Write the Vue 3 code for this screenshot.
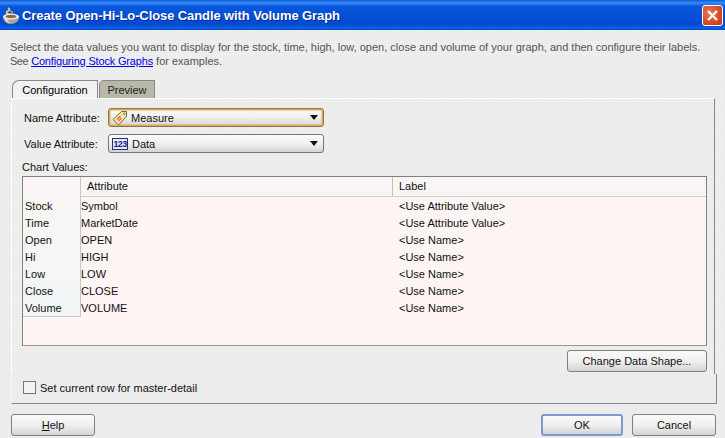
<script setup>
const rows = [
  ['Stock', 'Symbol', '<Use Attribute Value>'],
  ['Time', 'MarketDate', '<Use Attribute Value>'],
  ['Open', 'OPEN', '<Use Name>'],
  ['Hi', 'HIGH', '<Use Name>'],
  ['Low', 'LOW', '<Use Name>'],
  ['Close', 'CLOSE', '<Use Name>'],
  ['Volume', 'VOLUME', '<Use Name>'],
]
</script>

<template>
  <div class="window">
    <header class="titlebar">
      <svg class="cup" width="18" height="18" viewBox="0 0 18 18">
        <path d="M6 2c2 1 2 2 0 3s-2 2 0 3 3 1 3 1" fill="none" stroke="#f8d860" stroke-width="1.6" />
        <path d="M8 5c2 .5 3 1 2 2.5" fill="none" stroke="#f0b040" stroke-width="1.2" />
        <path d="M1 11c0 4 3.5 7 8 7s8-3 8-7z" fill="#a9a59a" />
        <path d="M2.5 12c.5 3 3 5 6 5-2-1-3.500-3-3.500-5z" fill="#e6e3da" />
        <ellipse cx="9" cy="10.500" rx="8" ry="3" fill="#f4f2ea" />
        <ellipse cx="9" cy="10.500" rx="5.500" ry="1.700" fill="#8a6a3a" />
      </svg>
      <span class="title">Create Open-Hi-Lo-Close Candle with Volume Graph</span>
      <button class="close">
        <svg width="13" height="13" viewBox="0 0 13 13"><path d="M2 2l9 9M11 2l-9 9" stroke="#fff" stroke-width="2.4" /></svg>
      </button>
    </header>

    <section class="upper">
      <p class="desc">Select the data values you want to display for the stock, time, high, low, open, close and volume of your graph, and then configure their labels.<br><span class="see">See</span> <a class="link">Configuring Stock Graphs</a> for examples.</p>

      <div class="tabs">
        <div class="tab active">Configuration</div>
        <div class="tab">Preview</div>
      </div>

      <div class="panel">
        <div class="field">
          <label>Name Attribute:</label>
          <div class="combo focused">
            <svg class="ico" width="16" height="16" viewBox="0 0 16 16">
              <path d="M9.500 1.500h5v5L6.500 15 1 9.500z" fill="#f6e8a8" stroke="#7a6c30" />
              <circle cx="12.300" cy="3.800" r="1" fill="#fff" stroke="#7a6c30" stroke-width=".7" />
              <path d="M5 9.500l3.500-3.500M6.500 11l3-3" stroke="#d86060" stroke-width="1.300" />
            </svg>
            <span>Measure</span>
            <i class="arrow"></i>
          </div>
        </div>
        <div class="field">
          <label>Value Attribute:</label>
          <div class="combo">
            <span class="num">123</span>
            <span>Data</span>
            <i class="arrow"></i>
          </div>
        </div>
        <div class="chart-label">Chart Values:</div>

        <div class="table">
          <div class="row-heads">
            <div class="corner"></div>
            <div v-for="r in rows" :key="r[0]" class="rh">{{ r[0] }}</div>
          </div>
          <div class="grid">
            <div class="thead">
              <div class="c1 th">Attribute</div>
              <div class="c2 th">Label</div>
            </div>
            <div v-for="r in rows" :key="r[0]" class="tr">
              <div class="c1">{{ r[1] }}</div>
              <div class="c2">{{ r[2] }}</div>
            </div>
          </div>
        </div>

        <div class="shape-row">
          <button class="btn shape">Change Data Shape...</button>
        </div>
      </div>
    </section>

    <section class="lower">
      <span class="check"></span>
      <span>Set current row for master-detail</span>
    </section>

    <footer class="footer">
      <button class="btn wide help"><u>H</u>elp</button>
      <div class="spacer"></div>
      <button class="btn ok">OK</button>
      <button class="btn wide cancel">Cancel</button>
    </footer>
  </div>
</template>

<style scoped>
.window {
  width: 725px;
  height: 438px;
  overflow: hidden;
  display: flex;
  flex-direction: column;
  background: #ececec;
  font-family: "Liberation Sans", Arial, sans-serif;
  font-size: 11px;
  color: #111;
}
.titlebar {
  height: 30px;
  flex: none;
  display: flex;
  align-items: center;
  padding: 0 2px 0 2px;
  box-sizing: border-box;
  background: linear-gradient(#0a5ce0 0, #3a8cf4 3px, #0858e0 6px, #0450d4 15px, #0349cf 24px, #0a62e8 28px, #0344b8 30px);
}
.cup { flex: none; }
.title {
  margin-left: 2px;
  font-size: 13px;
  font-weight: 700;
  color: #fff;
  letter-spacing: -0.1px;
  flex: 1;
  text-shadow: 1px 1px 0 #0a2a90;
}
.close {
  width: 21px;
  height: 21px;
  padding: 0;
  border: 1px solid #fff;
  border-radius: 3px;
  background: radial-gradient(circle at 35% 35%, #e87858, #d84a20 60%, #c03810);
  display: flex;
  align-items: center;
  justify-content: center;
}
.upper {
  height: 344px;
  flex: none;
  background-color: #eeeeee;
  background-image: radial-gradient(#e8e8e2 0.7px, transparent 0.8px);
  background-size: 3px 3px;
  display: flex;
  flex-direction: column;
}
.desc {
  margin: 0;
  padding: 10px 0 0 10px;
  height: 40px;
  line-height: 14px;
  color: #555;
  white-space: nowrap;
}
.see { letter-spacing: -0.5px; }
.link {
  color: #0000ee;
  text-decoration: underline;
  letter-spacing: -0.17px;
}
.tabs {
  display: flex;
  margin-left: 12px;
  height: 18px;
  flex: none;
}
.tab {
  width: 56px;
  margin-left: 1px;
  box-sizing: border-box;
  height: 18px;
  border: 1px solid #888;
  border-bottom: 0;
  border-radius: 5px 0 0 0;
  background: #b8b8a8;
  text-align: center;
  line-height: 18px;
  color: #222;
}
.tab.active {
  width: 86px;
  margin-left: 0;
  border-radius: 7px 0 0 0;
  background: #f2f2f2;
  color: #000;
}
.panel {
  margin-left: 11px;
  width: 704px;
  box-sizing: border-box;
  flex: 1;
  border-top: 1px solid #fff;
  border-left: 1px solid #fff;
  border-right: 1px solid #888;
  padding: 9px 7px 0 10px;
}
.field {
  display: flex;
  align-items: center;
  height: 19px;
  margin-bottom: 7px;
}
.field label {
  width: 86px;
  padding-left: 2px;
  box-sizing: border-box;
}
.combo {
  width: 216px;
  height: 19px;
  box-sizing: border-box;
  display: flex;
  align-items: center;
  gap: 3px;
  padding: 0 5px 0 3px;
  border: 1px solid #777;
  border-radius: 3px;
  background: linear-gradient(#fafafa, #f0f0f0 50%, #d4d4d4);
  position: relative;
}
.combo.focused {
  box-shadow: inset 0 0 0 1.5px #eeaa38;
}
.combo span:nth-of-type(1) { flex: none; }
.ico { flex: none; }
.num {
  width: 14px;
  height: 10px;
  margin: 0 1px 0 0;
  border: 1px solid #2a2a80;
  background: #e4e8f8;
  color: #20207a;
  font-size: 9px;
  font-weight: 700;
  line-height: 10px;
  text-align: center;
  letter-spacing: -0.6px;
  box-sizing: content-box;
}
.arrow {
  margin-left: auto;
  width: 0;
  height: 0;
  border-left: 4px solid transparent;
  border-right: 4px solid transparent;
  border-top: 5px solid #111;
}
.chart-label {
  height: 16px;
  margin-top: 2px;
  line-height: 14px;
}
.table {
  width: 685px;
  height: 170px;
  box-sizing: border-box;
  border: 1px solid #808080;
  border-bottom-color: #999;
  background: #fff5f5;
  display: flex;
}
.row-heads {
  width: 58px;
  flex: none;
  align-self: flex-start;
  background: linear-gradient(#fbf5f5, #f2f6f6);
  border-right: 1px solid #c8c8c8;
  border-bottom: 1px solid #c8c8c8;
  box-sizing: border-box;
  height: 140px;
}
.corner { height: 20px; }
.rh, .tr {
  height: 17px;
  box-sizing: border-box;
  padding-top: 1px;
  line-height: 17px;
}
.rh { padding-left: 2px; }
.grid { flex: 1; }
.thead {
  display: flex;
  height: 20px;
  background: #f9f5f5;
  border-bottom: 1px solid #d0d0d0;
  box-sizing: border-box;
}
.th {
  line-height: 19px;
  padding-left: 6px;
  border-right: 1px solid #c0c0c0;
}
.th.c2 { border-right: 0; }
.tr { display: flex; }
.c1 {
  width: 312px;
  flex: none;
  box-sizing: border-box;
}
.c2 {
  flex: 1;
  padding-left: 6px;
}
.shape-row {
  display: flex;
  justify-content: flex-end;
  margin-top: 4px;
}
.btn {
  font: inherit;
  color: #111;
  height: 22px;
  box-sizing: border-box;
  border: 1px solid #808080;
  border-radius: 3px;
  background: linear-gradient(#fafafa, #f0f0f0 50%, #d4d4d4);
  padding: 0;
}
.shape { width: 140px; }
.lower {
  height: 30px;
  flex: none;
  margin-left: 11px;
  width: 706px;
  box-sizing: border-box;
  border-left: 1px solid #f6f6f6;
  border-right: 1px solid #888;
  border-bottom: 1px solid #888;
  display: flex;
  align-items: center;
  gap: 4px;
  padding: 0 0 2px 11px;
}
.check {
  width: 13px;
  height: 13px;
  box-sizing: border-box;
  border: 1px solid #777;
  background: #f2f2f2;
}
.footer {
  flex: 1;
  display: flex;
  padding: 10px 9px 3px 11px;
  align-items: flex-start;
}
.wide { width: 84px; }
.spacer { flex: 1; }
.ok {
  width: 82px;
  margin-right: 9px;
  border: 2px solid #7a9ad0;
}
</style>

<style>
html, body { margin: 0; background: #ececec; }
</style>
